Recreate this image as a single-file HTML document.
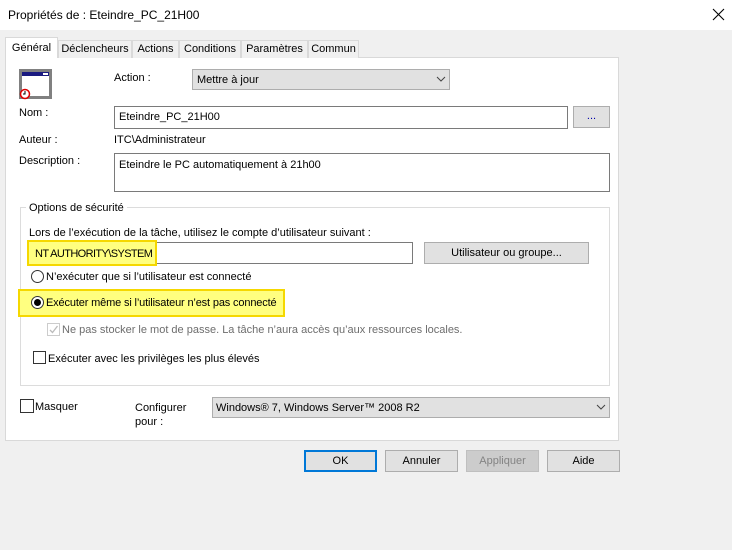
<!DOCTYPE html>
<html><head><meta charset="utf-8"><style>
*{box-sizing:border-box;margin:0;padding:0}
body{width:732px;height:550px;background:#f0f0f0;font-family:"Liberation Sans",sans-serif;font-size:11px;color:#000;position:relative;overflow:hidden}
.a{position:absolute;white-space:nowrap}
.tab{position:absolute;top:40px;height:18px;border:1px solid #d9d9d9;border-bottom:none;background:#f0f0f0;text-align:center;line-height:16px}
.btn{position:absolute;background:#e1e1e1;border:1px solid #adadad;text-align:center}
.in{position:absolute;background:#fff;border:1px solid #7a7a7a;padding-left:4px}
.cb{position:absolute;width:13px;height:13px;border:1px solid #333;background:#fff}
.rd{position:absolute;width:13px;height:13px;border:1px solid #333;border-radius:50%;background:#fff}
.hl{position:absolute;border:2px solid #f5d800;background:#ffff80}
</style></head><body>
<div class="a" style="left:0;top:0;width:732px;height:30px;background:#fff"></div>
<div class="a" style="left:8px;top:8px;font-size:12px">Propriétés de : Eteindre_PC_21H00</div>
<svg class="a" style="left:712px;top:8px" width="13" height="13"><path d="M1 1L12 12M12 1L1 12" stroke="#000" stroke-width="1.1"/></svg>

<div class="a" style="left:5px;top:57px;width:614px;height:384px;background:#fff;border:1px solid #d9d9d9"></div>
<div class="tab" style="left:5px;top:37px;width:53px;height:21px;background:#fff;line-height:20px;z-index:2">Général</div>
<div class="tab" style="left:58px;width:74px">Déclencheurs</div>
<div class="tab" style="left:132px;width:47px">Actions</div>
<div class="tab" style="left:179px;width:62px">Conditions</div>
<div class="tab" style="left:241px;width:67px">Paramètres</div>
<div class="tab" style="left:308px;width:51px">Commun</div>

<svg class="a" style="left:19px;top:69px" width="34" height="32">
<rect x="1.5" y="1.5" width="30" height="27" fill="#fff" stroke="#808080" stroke-width="3"/>
<rect x="3" y="3" width="27" height="4" fill="#1a1a80"/>
<rect x="24" y="4" width="5" height="2" fill="#fff"/>
<circle cx="6" cy="25" r="4.5" fill="#fff" stroke="#d00" stroke-width="1.5"/>
<path d="M6 22v3h-2" stroke="#000" fill="none"/>
</svg>

<div class="a" style="left:114px;top:72px">Action :</div>
<div class="btn" style="left:192px;top:69px;width:258px;height:21px;text-align:left;padding-left:4px;line-height:20px">Mettre à jour</div>
<svg class="a" style="left:436px;top:76px" width="10" height="7"><path d="M1 1L5 5L9 1" stroke="#444" fill="none"/></svg>

<div class="a" style="left:19px;top:107px">Nom :</div>
<div class="in" style="left:114px;top:106px;width:454px;height:23px;line-height:20px">Eteindre_PC_21H00</div>
<div class="btn" style="left:573px;top:106px;width:37px;height:22px;line-height:18px;color:#00a">...</div>
<div class="a" style="left:19px;top:134px">Auteur :</div>
<div class="a" style="left:114px;top:134px">ITC\Administrateur</div>
<div class="a" style="left:19px;top:155px">Description :</div>
<div class="in" style="left:114px;top:153px;width:496px;height:39px;padding-top:5px">Eteindre le PC automatiquement à 21h00</div>

<div class="a" style="left:20px;top:207px;width:590px;height:179px;border:1px solid #dcdcdc"></div>
<div class="a" style="left:26px;top:202px;background:#fff;padding:0 3px">Options de sécurité</div>
<div class="a" style="left:29px;top:227px">Lors de l’exécution de la tâche, utilisez le compte d’utilisateur suivant :</div>
<div class="in" style="left:29px;top:242px;width:384px;height:22px"></div>
<div class="hl" style="left:27px;top:240px;width:130px;height:26px"></div>
<div class="a" style="left:35px;top:248px;letter-spacing:-0.6px">NT AUTHORITY\SYSTEM</div>
<div class="btn" style="left:424px;top:242px;width:165px;height:22px;line-height:20px">Utilisateur ou groupe...</div>

<div class="rd" style="left:31px;top:270px"></div>
<div class="a" style="left:46px;top:271px">N’exécuter que si l’utilisateur est connecté</div>
<div class="hl" style="left:18px;top:289px;width:267px;height:28px"></div>
<div class="rd" style="left:31px;top:296px"><div style="position:absolute;left:2px;top:2px;width:7px;height:7px;border-radius:50%;background:#000"></div></div>
<div class="a" style="left:46px;top:297px;letter-spacing:-0.15px">Exécuter même si l’utilisateur n’est pas connecté</div>
<div class="cb" style="left:47px;top:323px;border-color:#ccc"><svg width="11" height="11" style="position:absolute;left:0;top:0"><path d="M2 6l2.5 2.5L9.5 2" stroke="#bbb" fill="none" stroke-width="1.3"/></svg></div>
<div class="a" style="left:62px;top:324px;color:#6d6d6d">Ne pas stocker le mot de passe. La tâche n’aura accès qu’aux ressources locales.</div>
<div class="cb" style="left:33px;top:351px"></div>
<div class="a" style="left:48px;top:353px">Exécuter avec les privilèges les plus élevés</div>

<div class="cb" style="left:20px;top:399px;width:14px;height:14px"></div>
<div class="a" style="left:35px;top:401px">Masquer</div>
<div class="a" style="left:135px;top:401px;line-height:14px">Configurer<br>pour :</div>
<div class="btn" style="left:212px;top:397px;width:398px;height:21px;text-align:left;padding-left:3px;line-height:20px">Windows® 7, Windows Server™ 2008 R2</div>
<svg class="a" style="left:596px;top:404px" width="10" height="7"><path d="M1 1L5 5L9 1" stroke="#444" fill="none"/></svg>

<div class="btn" style="left:304px;top:450px;width:73px;height:22px;border:2px solid #0078d7;line-height:19px">OK</div>
<div class="btn" style="left:385px;top:450px;width:73px;height:22px;line-height:21px">Annuler</div>
<div class="btn" style="left:466px;top:450px;width:73px;height:22px;line-height:21px;background:#ccc;border-color:#bfbfbf;color:#838383">Appliquer</div>
<div class="btn" style="left:547px;top:450px;width:73px;height:22px;line-height:21px">Aide</div>
</body></html>
